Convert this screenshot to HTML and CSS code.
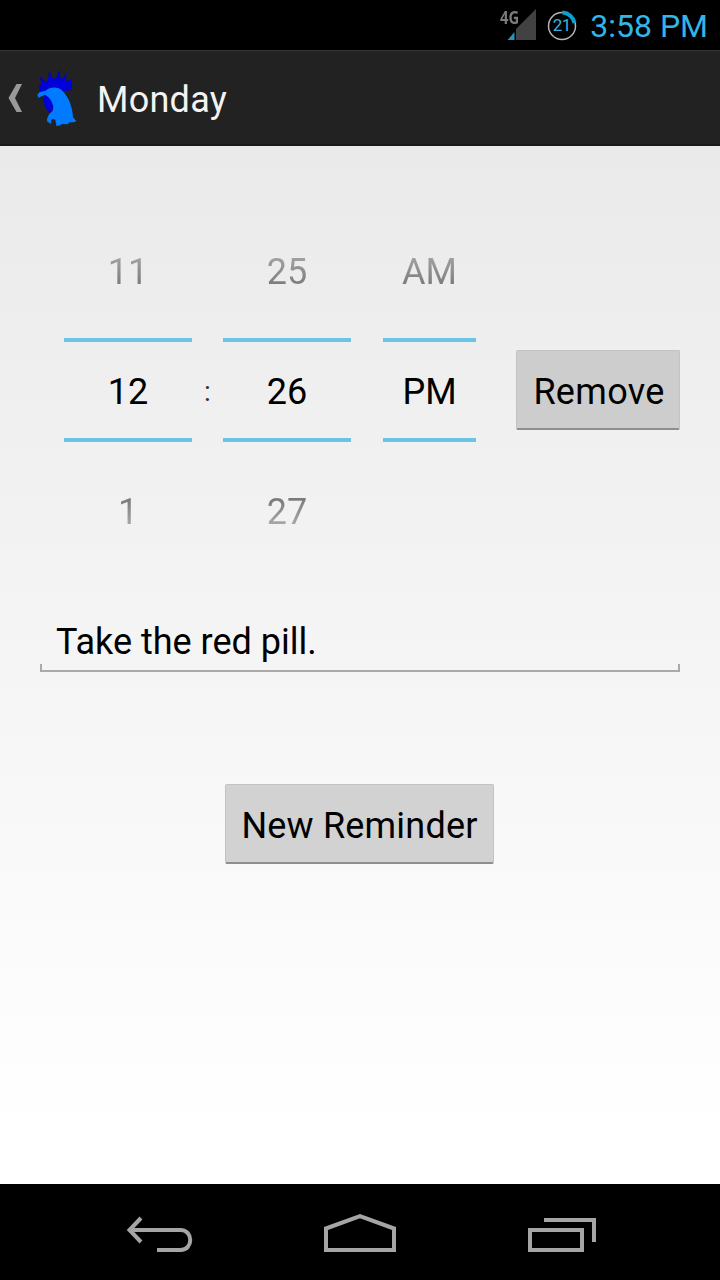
FILE: index.html
```html
<!DOCTYPE html>
<html lang="en">

<head>
    <meta charset="UTF-8">
    <meta name="viewport" content="width=device-width, initial-scale=1.0">
    <title>Monday</title>
    <link rel="stylesheet" href="styles.css">
</head>

<body>

    <div class="status-bar">
        <div class="signal">
            <svg width="36" height="34" viewBox="0 0 36 34">
                <path d="M36 1V32H16V21Z" fill="#424242" />
                <path d="M14.500 24V32H7.500Z" fill="#2b93b8" />
            </svg>
            <span class="network">4G</span>
        </div>
        <div class="battery">
            <svg width="32" height="32" viewBox="0 0 32 32" fill="none">
                <circle cx="16" cy="16" r="13.500" stroke="#b4b4b4" stroke-width="1.500" />
                <path d="M16.500 2.500A13 13 0 0 1 28.500 13" stroke="#0d9fd0" stroke-width="4" />
            </svg>
            <span class="level">21</span>
        </div>
        <span class="clock">3:58 PM</span>
    </div>

    <header class="action-bar">
        <svg class="up" width="15" height="30" viewBox="0 0 15 30">
            <path d="M8.500 1H14L7 15L14 29H8.500L.5 15Z" fill="#999" />
        </svg>
        <svg class="logo" width="44" height="60" viewBox="108 54 132 180">
            <path d="M119 124L117 107L124 103L119 78L134 93L144 92L147 61L158 85L168 86L178 58L182 86L190 84L201 68L197 92L206 92L217 86L213 95L217 101L214 120L190 124Z" fill="#0000d8" />
            <path d="M133 136L131 155L136 172L149 191L163 168L156 138Z" fill="#0000d8" />
            <path d="M112 135L118 127L137 122C150 110 171 110 184 119C205 139 217 166 219 202L229 213L222 217L208 217L203 223L185 222L181 226L169 228L166 209L158 207L153 209L154 222L142 215L141 207L147 193L158 183L160 172C158 155 148 141 135 134L115 143Z" fill="#007bff" />
        </svg>
        <h1>Monday</h1>
    </header>

    <main>
        <div class="reminder">
            <div class="time-row">
                <div class="picker">
                    <span class="prev">11</span>
                    <span class="current">12</span>
                    <span class="next">1</span>
                </div>
                <span class="colon">:</span>
                <div class="picker">
                    <span class="prev">25</span>
                    <span class="current">26</span>
                    <span class="next">27</span>
                </div>
                <div class="picker ampm">
                    <span class="prev">AM</span>
                    <span class="current">PM</span>
                    <span class="next"></span>
                </div>
                <button class="btn remove">Remove</button>
            </div>
            <div class="message">Take the red pill.</div>
        </div>
        <button class="btn new">New Reminder</button>
    </main>

    <nav class="nav-bar">
        <svg width="68" height="40" viewBox="0 0 68 40" fill="none" stroke="#a5a5a5" stroke-width="4">
            <path d="M15 4L3.500 16L15 28M3 16H54.500C67.500 16 67.500 36 54.500 36H31" />
        </svg>
        <svg class="home" width="72" height="40" viewBox="0 0 72 40" fill="none" stroke="#a5a5a5" stroke-width="4">
            <path d="M2 14.500L36 2.200L70 14.500V36H2Z" />
        </svg>
        <svg width="68" height="40" viewBox="0 0 68 40" fill="none" stroke="#a5a5a5" stroke-width="4">
            <path d="M2 16H54V36H2ZM16 6H66V28" />
        </svg>
    </nav>

</body>

</html>
```
FILE: styles.css
```css
* {
    box-sizing: border-box;
}

body {
    margin: 0;
    height: 1280px;
    display: flex;
    flex-direction: column;
    font-family: Roboto, sans-serif;
    font-size: 36px;
    color: black;
    background-color: black;
}

.status-bar {
    height: 50px;
    display: flex;
    align-items: center;
    justify-content: flex-end;
    padding-right: 12px;
    color: #33b5e5;
}

.signal {
    position: relative;
    height: 34px;
    margin-right: 10px;
}

.network {
    position: absolute;
    left: 0;
    top: 0;
    font-family: "Open Sans", sans-serif;
    font-size: 18px;
    line-height: 18px;
    font-weight: bold;
    color: #7c7c7c;
    transform: scaleX(0.82);
    transform-origin: left;
}

.battery {
    position: relative;
    height: 32px;
    margin-right: 12px;
}

.level {
    position: absolute;
    left: 0;
    top: 0;
    width: 31px;
    font-size: 17px;
    line-height: 33px;
    letter-spacing: -0.5px;
    text-align: center;
}

.clock {
    padding-top: 2px;
    font-size: 32px;
}

.action-bar {
    height: 96px;
    display: flex;
    align-items: center;
    padding-left: 8px;
    background-color: #222;
    border-top: 1px solid #363636;
    border-bottom: 2px solid #1b1b1b;
}

.up {
    margin-top: 1px;
}

.logo {
    margin: 0 17px 0 13px;
}

h1 {
    margin: 0;
    padding-top: 4px;
    font-size: 36px;
    font-weight: normal;
    letter-spacing: 0.25px;
    color: #f3f3f3;
}

main {
    height: 1038px;
    display: flex;
    flex-direction: column;
    align-items: center;
    padding: 64px 40px 0;
    background: linear-gradient(#eaeaea, #fff 95%);
}

.reminder {
    width: 640px;
}

.time-row {
    display: flex;
    align-items: center;
    padding-left: 24px;
}

.picker {
    width: 128px;
    display: flex;
    flex-direction: column;
    text-align: center;
}

.picker.ampm {
    width: 93px;
    margin-left: 32px;
}

.prev, .next {
    height: 128px;
    line-height: 124px;
    color: transparent;
    background-clip: text;
    -webkit-background-clip: text;
}

.prev {
    background-image: linear-gradient(#c0c0c0 20%, #707070 65%);
}

.next {
    line-height: 140px;
    background-image: linear-gradient(#707070 40%, #c0c0c0 75%);
}

.current {
    height: 104px;
    line-height: 101px;
    border-top: 4px solid #6bc4e4;
    border-bottom: 4px solid #6bc4e4;
}

.colon {
    width: 31px;
    padding-top: 2px;
    font-size: 28px;
    text-align: center;
    color: #333;
}

.btn {
    height: 80px;
    padding: 4px 0 0;
    border: 1px solid #c3c3c3;
    border-bottom: 2px solid #8e8e8e;
    border-radius: 2px;
    background-color: #cdcdcd;
    font-family: inherit;
    font-size: 36px;
    letter-spacing: 0.2px;
    color: black;
}

.remove {
    width: 164px;
    margin-left: 40px;
    padding-left: 2px;
    letter-spacing: 0.3px;
}

.new {
    width: 269px;
    margin: 112px 1px 0 0;
    background-color: #d2d2d2;
}

.message {
    height: 62px;
    margin-top: 40px;
    padding-left: 16px;
    line-height: 64px;
    /* underline with short upturned ends */
    background:
        linear-gradient(#aaa, #aaa) bottom / 100% 2px no-repeat,
        linear-gradient(#aaa, #aaa) left bottom / 2px 8px no-repeat,
        linear-gradient(#aaa, #aaa) right bottom / 2px 8px no-repeat;
}

.nav-bar {
    height: 96px;
    display: flex;
    align-items: center;
    justify-content: space-between;
    padding: 4px 124px 0 126px;
}

.home {
    margin-right: 2px;
}
```
